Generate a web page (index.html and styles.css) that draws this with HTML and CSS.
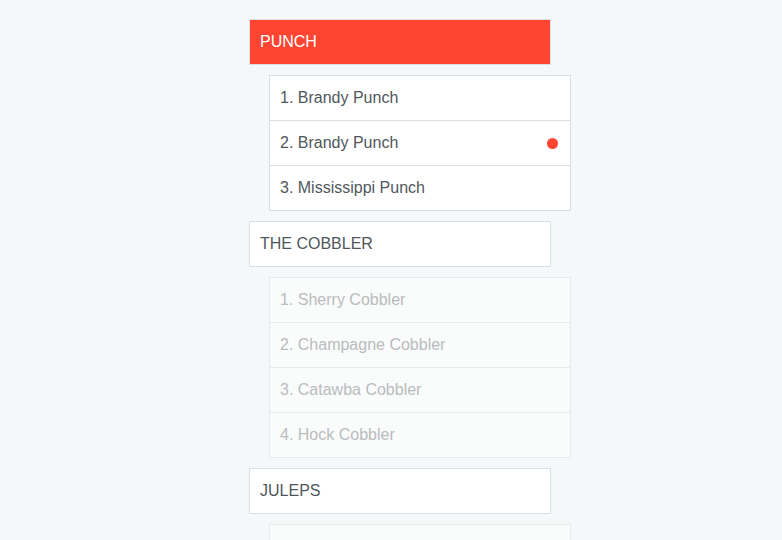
FILE: index.html
```html
<!DOCTYPE html>
<html>
<head>
<meta charset="utf-8">
<link rel="stylesheet" href="styles.css">
</head>
<body>
<div class="menu">
  <div class="group">
    <div class="head active">PUNCH</div>
    <ul class="list">
      <li class="item">1. Brandy Punch</li>
      <li class="item">2. Brandy Punch<span class="dot"></span></li>
      <li class="item">3. Mississippi Punch</li>
    </ul>
  </div>
  <div class="group">
    <div class="head">THE COBBLER</div>
    <ul class="list muted">
      <li class="item">1. Sherry Cobbler</li>
      <li class="item">2. Champagne Cobbler</li>
      <li class="item">3. Catawba Cobbler</li>
      <li class="item">4. Hock Cobbler</li>
    </ul>
  </div>
  <div class="group">
    <div class="head">JULEPS</div>
    <ul class="list muted">
      <li class="item">1. Mint Julep</li>
      <li class="item">2. Brandy Julep</li>
    </ul>
  </div>
</div>
</body>
</html>
```
FILE: styles.css
```css
html, body {
  margin: 0;
  padding: 0;
  background: #f6f7f9;
  font-family: "Liberation Sans", Arial, sans-serif;
  font-size: 16px;
  color: #50575c;
}
.menu {
  width: 322px;
  margin-left: 249px;
  padding-top: 19px;
}
.group {
  display: flex;
  flex-direction: column;
  gap: 10px;
  margin-bottom: 10px;
}
.head {
  width: 300px;
  height: 44px;
  box-sizing: content-box;
  border: 1px solid #d7e0e4;
  background: #fff;
  display: flex;
  align-items: center;
  padding: 0 0 0 10px;
  width: 290px;
  line-height: 44px;
}
.head.active {
  background: #ff4532;
  color: #fff;
}
.list {
  list-style: none;
  margin: 0 0 0 20px;
  padding: 0;
  width: 300px;
  border: 1px solid #d7e0e4;
  background: #fff;
}
.item {
  height: 44px;
  display: flex;
  align-items: center;
  justify-content: space-between;
  padding: 0 12px 0 10px;
  border-top: 1px solid #d7e0e4;
}
.item:first-child {
  border-top: none;
}
.dot {
  width: 11px;
  height: 11px;
  border-radius: 50%;
  background: #ff4532;
}
.list.muted {
  background: #fafbfb;
  border-color: #e6ebee;
  color: #b9bcbe;
}
.list.muted .item {
  border-top-color: #e6ebee;
}
.list.muted .item:first-child {
  border-top: none;
}
```
